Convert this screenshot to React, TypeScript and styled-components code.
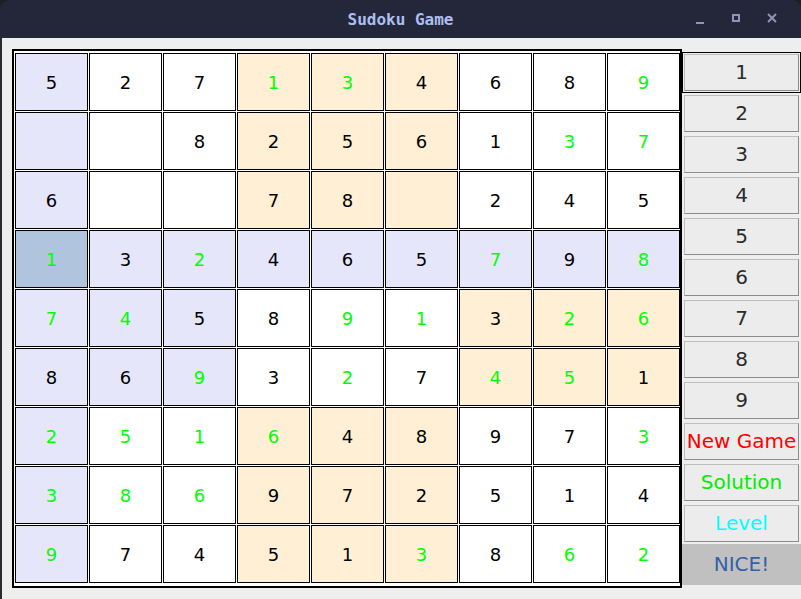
import React from "react";
import styled, { createGlobalStyle } from "styled-components";

const GlobalStyle = createGlobalStyle`
  html, body {
    margin: 0;
    padding: 0;
    background: #1d1f26;
  }
  #root {
    width: 801px;
    height: 599px;
    overflow: hidden;
  }
`;

const Window = styled.div`
  width: 801px;
  height: 599px;
  display: flex;
  flex-direction: column;
`;

const TitleBar = styled.div`
  height: 38px;
  flex: none;
  background: #232739;
  border-radius: 9px 9px 0 0;
  display: grid;
  grid-template-columns: 1fr auto 1fr;
  align-items: center;
`;

const Title = styled.div`
  grid-column: 2;
  font-family: "DejaVu Sans Mono", monospace;
  font-weight: bold;
  font-size: 16px;
  color: #aebef0;
  padding-top: 1px;
`;

const Controls = styled.div`
  grid-column: 3;
  justify-self: end;
  display: flex;
  align-items: center;
  padding-right: 11px;
`;

const ControlIcon = styled.svg`
  width: 36px;
  height: 14px;
  display: block;
`;

const Content = styled.div`
  flex: 1;
  background: #eeeeee;
  border-left: 2px solid #2a2b30;
  display: flex;
  align-items: flex-start;
  padding: 11px 0 0 10px;
`;

const Board = styled.div`
  border: 2px solid #000;
  padding: 2px 0 3px 1px;
  background: #fff;
  display: grid;
  grid-template-columns: repeat(9, 73px);
  grid-template-rows: repeat(9, 58px);
  gap: 1px;
`;

const Cell = styled.div<{ $bg: string; $fg: string }>`
  box-sizing: border-box;
  border: 1px solid #000;
  background: ${(p) => p.$bg};
  color: ${(p) => p.$fg};
  display: flex;
  align-items: center;
  justify-content: center;
  font-family: "DejaVu Sans", sans-serif;
  font-size: 18px;
`;

const Column = styled.div`
  width: 119px;
  margin-top: 3px;
  display: flex;
  flex-direction: column;
`;

const ButtonRing = styled.div<{ $focused?: boolean }>`
  box-sizing: border-box;
  height: 41px;
  border: 1px solid ${(p) => (p.$focused ? "#000" : "#eeeeee")};
  padding: 1px;
  display: flex;
`;

const ButtonFace = styled.div<{ $color: string }>`
  flex: 1;
  box-sizing: border-box;
  border-top: 1px solid #bdbdbd;
  border-left: 1px solid #bdbdbd;
  border-bottom: 1px solid #8c8c8c;
  border-right: 1px solid #8c8c8c;
  background: #ececec;
  color: ${(p) => p.$color};
  display: flex;
  align-items: center;
  justify-content: center;
  padding-bottom: 2px;
  font-family: "DejaVu Sans", sans-serif;
  font-size: 20px;
`;

const StatusLabel = styled.div`
  height: 41px;
  background: #c0c0c0;
  color: #3561a8;
  display: flex;
  align-items: center;
  justify-content: center;
  padding-bottom: 2px;
  box-sizing: border-box;
  font-family: "DejaVu Sans", sans-serif;
  font-size: 20px;
`;

const rows: string[][] = [
  ["5", "2", "7", "+1", "+3", "4", "6", "8", "+9"],
  ["", "", "8", "2", "5", "6", "1", "+3", "+7"],
  ["6", "", "", "7", "8", "", "2", "4", "5"],
  ["+1", "3", "+2", "4", "6", "5", "+7", "9", "+8"],
  ["+7", "+4", "5", "8", "+9", "+1", "3", "+2", "+6"],
  ["8", "6", "+9", "3", "+2", "7", "+4", "+5", "1"],
  ["+2", "+5", "+1", "+6", "4", "8", "9", "7", "+3"],
  ["+3", "+8", "+6", "9", "7", "2", "5", "1", "4"],
  ["+9", "7", "4", "5", "1", "+3", "8", "+6", "+2"],
];

const SEL_R = 3;
const SEL_C = 0;

function cellBg(r: number, c: number): string {
  if (r === SEL_R && c === SEL_C) return "#b0c4de";
  const sameBox =
    Math.floor(r / 3) === Math.floor(SEL_R / 3) &&
    Math.floor(c / 3) === Math.floor(SEL_C / 3);
  if (r === SEL_R || c === SEL_C || sameBox) return "#e6e6fa";
  if ((Math.floor(r / 3) + Math.floor(c / 3)) % 2 === 1) return "#ffefd5";
  return "#ffffff";
}

const buttons: { label: string; color: string }[] = [
  ...["1", "2", "3", "4", "5", "6", "7", "8", "9"].map((d) => ({
    label: d,
    color: "#2b2b2b",
  })),
  { label: "New Game", color: "#ff0000" },
  { label: "Solution", color: "#00ee00" },
  { label: "Level", color: "#00ffff" },
];

export default function App() {
  return (
    <>
      <GlobalStyle />
      <Window>
        <TitleBar>
          <Title>Sudoku Game</Title>
          <Controls>
            <ControlIcon viewBox="0 0 36 14">
              <rect x="14" y="10" width="8" height="2" fill="#8e94ba" />
            </ControlIcon>
            <ControlIcon viewBox="0 0 36 14">
              <rect
                x="15"
                y="3"
                width="6"
                height="6"
                fill="none"
                stroke="#8e94ba"
                strokeWidth="2"
              />
            </ControlIcon>
            <ControlIcon viewBox="0 0 36 14">
              <path
                d="M14 2 L22 10 M22 2 L14 10"
                stroke="#8e94ba"
                strokeWidth="2"
              />
            </ControlIcon>
          </Controls>
        </TitleBar>
        <Content>
          <Board>
            {rows.map((row, r) =>
              row.map((v, c) => {
                const entered = v.startsWith("+");
                const text = entered ? v.slice(1) : v;
                return (
                  <Cell
                    key={`${r}-${c}`}
                    $bg={cellBg(r, c)}
                    $fg={entered ? "#00ff00" : "#000000"}
                  >
                    {text}
                  </Cell>
                );
              })
            )}
          </Board>
          <Column>
            {buttons.map((b, i) => (
              <ButtonRing key={b.label} $focused={i === 0}>
                <ButtonFace $color={b.color}>{b.label}</ButtonFace>
              </ButtonRing>
            ))}
            <StatusLabel>NICE!</StatusLabel>
          </Column>
        </Content>
      </Window>
    </>
  );
}
